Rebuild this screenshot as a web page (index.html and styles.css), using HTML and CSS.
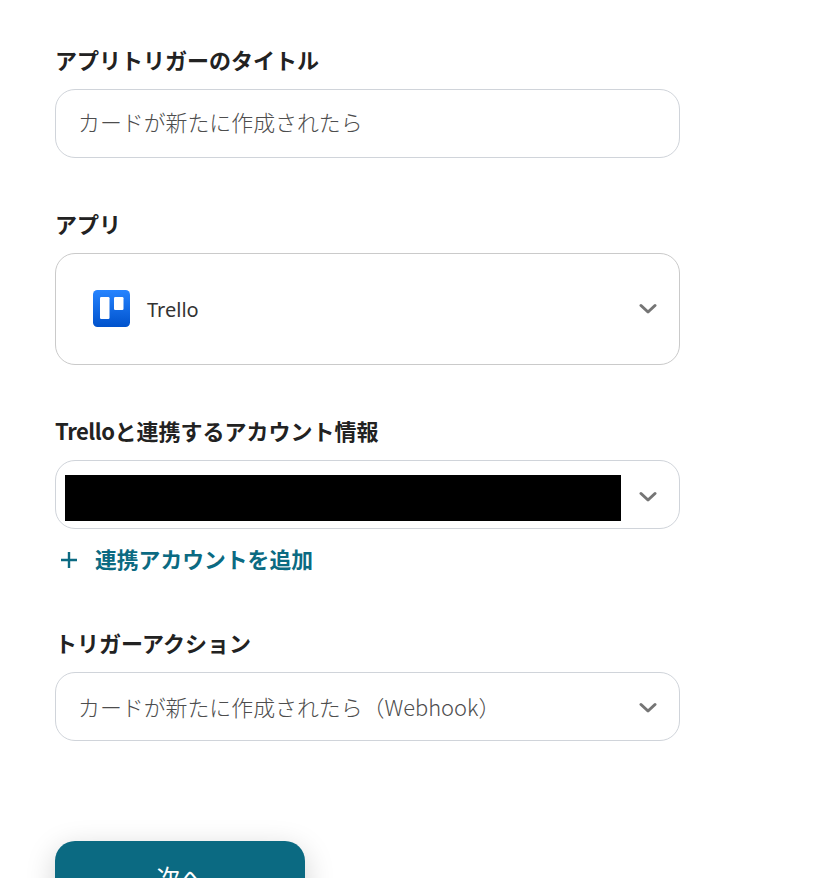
FILE: index.html
```html
<!DOCTYPE html>
<html lang="ja">
<head>
<meta charset="utf-8">
<title>アプリトリガー</title>
<link rel="stylesheet" href="styles.css">
</head>
<body>
<main class="form">
  <section class="field">
    <label class="label">アプリトリガーのタイトル</label>
    <div class="control control-text control-title"><span class="value">カードが新たに作成されたら</span></div>
  </section>
  <section class="field">
    <label class="label">アプリ</label>
    <div class="control control-app">
      <svg class="logo" viewBox="0 0 37 37" aria-hidden="true">
        <defs>
          <linearGradient id="trello" x1="0" y1="0" x2="0" y2="1">
            <stop offset="0" stop-color="#2684ff"/>
            <stop offset="1" stop-color="#0052cc"/>
          </linearGradient>
        </defs>
        <rect width="37" height="37" rx="4.5" fill="url(#trello)"/>
        <rect x="7" y="7" width="9.5" height="22" rx="1.2" fill="#fff"/>
        <rect x="21" y="7" width="9.5" height="13" rx="1.2" fill="#fff"/>
      </svg>
      <span class="app-name">Trello</span>
      <svg class="chevron" viewBox="0 0 18 12" aria-hidden="true"><path d="M2 2.5 L9 9 L16 2.5"/></svg>
    </div>
  </section>
  <section class="field field-account">
    <label class="label"><span class="latin">Trello</span>と連携するアカウント情報</label>
    <div class="control control-account">
      <div class="redacted"></div>
      <svg class="chevron chevron-account" viewBox="0 0 18 12" aria-hidden="true"><path d="M2 2.5 L9 9 L16 2.5"/></svg>
    </div>
    <a class="add-link">
      <svg class="plus" viewBox="0 0 18 18" aria-hidden="true"><path d="M9 1 V17 M1 9 H17"/></svg>
      <span>連携アカウントを追加</span>
    </a>
  </section>
  <section class="field field-last">
    <label class="label">トリガーアクション</label>
    <div class="control control-text">
      <span class="value">カードが新たに作成されたら（Webhook）</span>
      <svg class="chevron chevron-action" viewBox="0 0 18 12" aria-hidden="true"><path d="M2 2.5 L9 9 L16 2.5"/></svg>
    </div>
  </section>
  <button class="next" type="button">次へ</button>
</main>
</body>
</html>
```
FILE: styles.css
```css
html, body {
  margin: 0;
  height: 878px;
  overflow: hidden;
  background: #fff;
}
body {
  font-family: "Noto Sans CJK JP", "Noto Sans", sans-serif;
  color: #222;
}
.form {
  display: flex;
  flex-direction: column;
  width: 625px;
  margin-left: 55px;
  padding-top: 45px;
}
.field {
  display: flex;
  flex-direction: column;
  margin-bottom: 51px;
}
.field-account {
  margin-bottom: 55px;
}
.field-last {
  margin-bottom: 100px;
}
.label {
  display: block;
  height: 30px;
  line-height: 28px;
  margin-bottom: 14px;
  font-size: 22px;
  font-weight: 700;
  color: #222;
}
.latin {
  letter-spacing: -0.5px;
}
.control {
  box-sizing: border-box;
  display: flex;
  align-items: center;
  border: 1px solid #d0d4da;
  border-radius: 20px;
  background: #fff;
}
.control-text {
  height: 69px;
  padding: 0 22px 0 22px;
}
.control-title {
  padding-bottom: 4px;
}
.control-app {
  height: 112px;
  padding: 0 22px 0 37px;
  border-color: #cacaca;
}
.control-account {
  height: 69px;
  padding: 0 22px 0 9px;
}
.value {
  font-size: 21.9px;
  font-weight: 300;
  color: #4d4d4d;
  white-space: nowrap;
}
.logo {
  width: 37px;
  height: 37px;
  margin-bottom: 1px;
  flex: none;
}
.app-name {
  margin-left: 17px;
  font-family: "Noto Sans", sans-serif;
  font-size: 20px;
  color: #333;
}
.chevron {
  width: 18px;
  height: 12px;
  margin-left: auto;
  flex: none;
  fill: none;
  stroke: #757575;
  stroke-width: 3;
  stroke-linecap: round;
  stroke-linejoin: round;
}
.chevron-account {
  margin-top: 5px;
}
.chevron-action {
  margin-top: 3px;
}
.redacted {
  width: 556px;
  height: 46px;
  margin-top: 6px;
  background: #000;
  flex: none;
}
.add-link {
  display: flex;
  align-items: center;
  height: 30px;
  margin-top: 14px;
  padding-left: 5px;
  color: #0b6a82;
  font-size: 21.8px;
  font-weight: 700;
}
.plus {
  width: 18px;
  height: 18px;
  margin: 3px 17px 0 0;
  fill: none;
  stroke: #0b6a82;
  stroke-width: 2.4;
}
.next {
  width: 250px;
  height: 70px;
  padding: 0;
  border: 0;
  border-radius: 20px;
  background: #0b6a82;
  color: #fff;
  font: 400 24px "Noto Sans CJK JP", sans-serif;
  box-shadow: 0 8px 30px rgba(0, 0, 0, 0.18);
}
```
